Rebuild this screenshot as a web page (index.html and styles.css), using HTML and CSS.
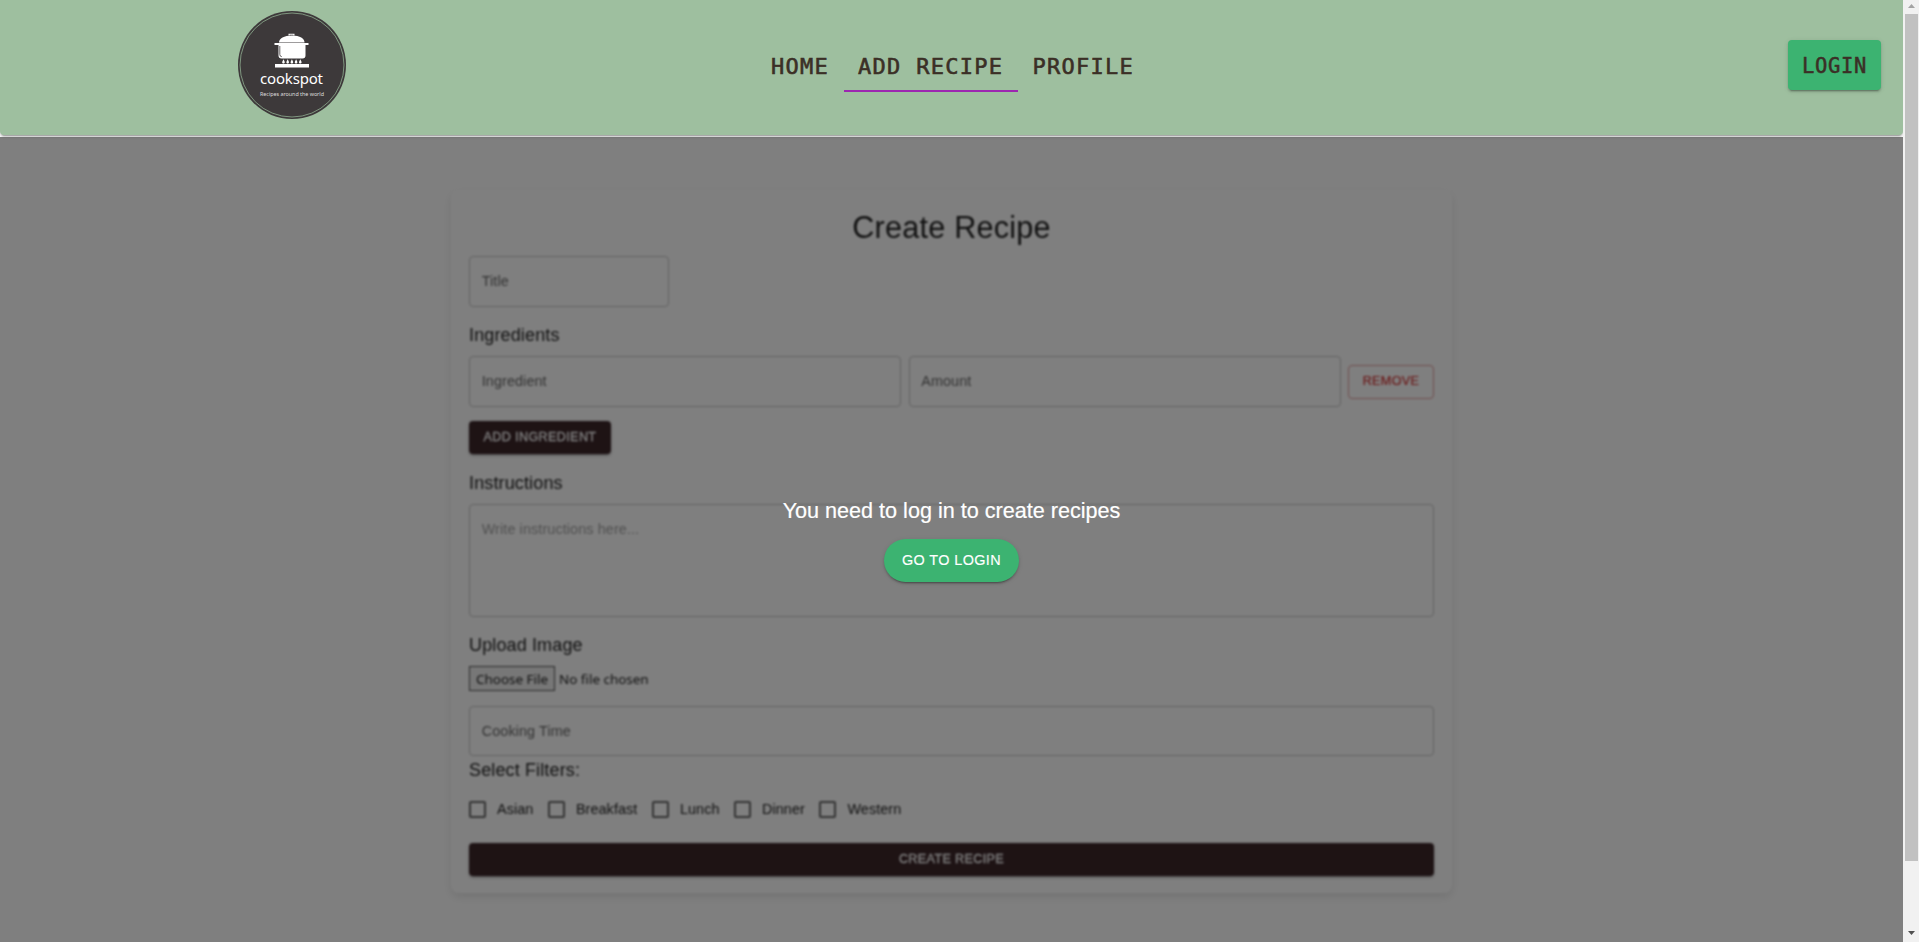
FILE: index.html
```html
<!DOCTYPE html>
<html lang="en">
<head>
<meta charset="utf-8">
<title>Cookspot</title>
<link rel="stylesheet" href="styles.css">
</head>
<body>
<div class="page">
  <header class="header">
    <svg class="logo" viewBox="0 0 108 108">
      <circle cx="54" cy="54" r="54" fill="#3d393a"/>
      <circle cx="54" cy="54" r="52" fill="none" stroke="#7f967f" stroke-width="1"/>
      <g fill="#fff">
        <path d="M50.5 24.5v-1.8h6v1.800h-1.200v-.8h-3.600v.8z"/>
        <path d="M41 31.500c0-4 5-7 13-7s12.500 3 12.500 7z"/>
        <path d="M36.500 32h34v2h-3v10.500c0 2-1 3-3 3h-21c-2 0-3-1-3-3v-10.500h-4z"/>
        <path d="M37 53h34v3.500h-34z"/>
        <path d="M45.500 48.200c2 3.300 1.300 4.300 0 4.300s-2-1 0-4.300zm4.200 0c2 3.300 1.300 4.300 0 4.300s-2-1 0-4.300zm4.200 0c2 3.300 1.300 4.300 0 4.300s-2-1 0-4.300zm4.200 0c2 3.300 1.300 4.300 0 4.300s-2-1 0-4.300zm4.200 0c2 3.300 1.300 4.300 0 4.300s-2-1 0-4.300z"/>
      </g>
      <path d="M41.800 35v8.500q0 2 2 2.200" fill="none" stroke="#3d393a" stroke-width=".8"/>
      <text class="logo-name" x="22" y="73" textLength="63">cookspot</text>
      <text class="logo-tag" x="22" y="84.500" textLength="64">Recipes around the world</text>
    </svg>
    <nav class="nav">
      <a class="tab">HOME</a>
      <a class="tab tab-active">ADD RECIPE</a>
      <a class="tab">PROFILE</a>
    </nav>
    <a class="login">LOGIN</a>
  </header>
  <main class="main">
    <section class="card">
      <h1 class="title">Create Recipe</h1>
      <div class="field field-title">Title</div>
      <h2 class="heading">Ingredients</h2>
      <div class="row">
        <div class="field grow">Ingredient</div>
        <div class="field grow">Amount</div>
        <div class="remove">REMOVE</div>
      </div>
      <div class="btn btn-add">ADD INGREDIENT</div>
      <h2 class="heading heading-instructions">Instructions</h2>
      <div class="field area">Write instructions here...</div>
      <h2 class="heading">Upload Image</h2>
      <div class="file"><span class="choose">Choose File</span><span>No file chosen</span></div>
      <div class="field field-time">Cooking Time</div>
      <h2 class="heading heading-filters">Select Filters:</h2>
      <div class="filters">
        <label class="filter"><span class="box"></span>Asian</label>
        <label class="filter"><span class="box"></span>Breakfast</label>
        <label class="filter"><span class="box"></span>Lunch</label>
        <label class="filter"><span class="box"></span>Dinner</label>
        <label class="filter"><span class="box"></span>Western</label>
      </div>
      <div class="btn">CREATE RECIPE</div>
    </section>
    <div class="overlay">
      <p class="message">You need to log in to create recipes</p>
      <a class="go">GO TO LOGIN</a>
    </div>
  </main>
</div>
<div class="scrollbar">
  <svg class="arrow" viewBox="0 0 16 14"><path d="M5 8h7L8.500 4z" fill="#a3a3a3"/></svg>
  <div class="thumb"></div>
  <svg class="arrow" viewBox="0 0 16 14"><path d="M5 5h7L8.500 9z" fill="#505050"/></svg>
</div>
</body>
</html>
```
FILE: styles.css
```css
* { box-sizing: border-box; }
body {
  margin: 0;
  height: 942px;
  display: flex;
  overflow: hidden;
  background: #fff;
  font-family: "Liberation Sans", Arial, sans-serif;
}
.page { width: 1903px; display: flex; flex-direction: column; }
.header {
  height: 135px;
  margin-bottom: 2px;
  padding: 0 22px 0 238px;
  display: grid;
  grid-template-columns: 1fr auto 1fr;
  background: #9ebf9f;
  border-radius: 0 0 4px 4px;
  box-shadow: 0 3px 1px -2px rgba(0,0,0,.2), 0 2px 2px rgba(0,0,0,.14), 0 1px 5px rgba(0,0,0,.12);
}
.logo { width: 108px; height: 108px; margin-top: 11px; }
.logo-name { font: 15px "Noto Sans", sans-serif; fill: #fff; }
.logo-tag { font: 5.400px "Noto Sans", sans-serif; fill: #ddd; }
.nav {
  display: flex;
  height: 52px;
  margin-top: 40px;
  /* offsets the uneven side padding so the tabs centre in the bar */
  transform: translateX(-107px);
}
.tab {
  padding: 0 14.500px;
  font: 22px/53px "DejaVu Sans Mono", monospace;
  letter-spacing: 1.290px;
  color: #3b2f26;
  -webkit-text-stroke: .6px #3b2f26;
}
.tab-active { border-bottom: 2px solid #9c27b0; }
.login {
  justify-self: end;
  width: 93px;
  height: 50px;
  margin-top: 40px;
  border-radius: 4px;
  background: #3cb371;
  text-align: center;
  font: 20.500px/52px "DejaVu Sans Mono", monospace;
  letter-spacing: .7px;
  color: #3b2f26;
  -webkit-text-stroke: .5px #3b2f26;
  box-shadow: 0 3px 1px -2px rgba(0,0,0,.2), 0 2px 2px rgba(0,0,0,.14), 0 1px 5px rgba(0,0,0,.12);
}
.main { position: relative; flex: 1; padding-top: 53px; }
.card {
  width: 1001px;
  height: 703px;
  margin: 0 auto;
  padding: 18px;
  border-radius: 8px;
  box-shadow: 0 4px 10px rgba(0,0,0,.1);
  background: #fff;
  filter: blur(.8px);
  color: #212121;
}
.title {
  margin: 0 0 9px;
  text-align: center;
  font-size: 30.600px;
  line-height: 38px;
  height: 39px;
  font-weight: 400;
  letter-spacing: .22px;
}
.field {
  height: 51px;
  padding: 0 11.700px;
  border: 1px solid #c4c4c4;
  border-radius: 4px;
  font-size: 14.400px;
  line-height: 48px;
  letter-spacing: .1px;
  color: #666;
}
.field-title { width: 200px; }
.heading {
  height: 29px;
  margin: 14px 0 6px;
  font-size: 18px;
  line-height: 28px;
  font-weight: 400;
  letter-spacing: .135px;
}
.row { display: flex; align-items: center; gap: 7.500px; }
.grow { flex: 1; }
.remove {
  width: 86px;
  height: 34px;
  border: 1px solid #e09a9a;
  border-radius: 4px;
  text-align: center;
  font-size: 12.600px;
  line-height: 31px;
  letter-spacing: .36px;
  color: #d32f2f;
  -webkit-text-stroke: .2px #d32f2f;
}
.btn {
  height: 33px;
  border-radius: 4px;
  background: #3c2629;
  color: #fff;
  text-align: center;
  font-size: 12.600px;
  line-height: 33px;
  letter-spacing: .36px;
  -webkit-text-stroke: .3px #fff;
  box-shadow: 0 3px 1px -2px rgba(0,0,0,.2), 0 2px 2px rgba(0,0,0,.14), 0 1px 5px rgba(0,0,0,.12);
}
.btn-add { width: 142px; margin-top: 14px; }
.heading-instructions { margin-top: 15px; }
.area { height: 113px; line-height: 49px; color: #a0a0a0; }
.file {
  display: flex;
  gap: 4px;
  height: 25px;
  margin-bottom: 15px;
  font: 13.450px/26px "Noto Sans", sans-serif;
}
.choose { width: 86px; border: 1px solid #555; background: #efefef; text-align: center; line-height: 24px; }
.field-time { height: 50px; }
.heading-filters { margin: 0 0 16px; }
.filters { display: flex; gap: 14.500px; height: 17px; margin-bottom: 25px; }
.filter { display: flex; gap: 11px; font-size: 14.400px; line-height: 16px; letter-spacing: .080px; }
.box { width: 17px; height: 17px; border: 2px solid #666; border-radius: 2px; }
.overlay {
  position: absolute;
  inset: 0;
  display: flex;
  flex-direction: column;
  align-items: center;
  justify-content: center;
  background: rgba(0,0,0,.5);
}
.message { margin: 0 0 15px; font-size: 21.600px; line-height: 27px; color: #fff; -webkit-text-stroke: .2px #fff; }
.go {
  width: 135px;
  height: 43px;
  border-radius: 22px;
  background: #3cb371;
  color: #fff;
  text-align: center;
  font-size: 14.400px;
  line-height: 43px;
  letter-spacing: .4px;
  -webkit-text-stroke: .15px #fff;
  box-shadow: 0 3px 1px -2px rgba(0,0,0,.2), 0 2px 2px rgba(0,0,0,.14), 0 1px 5px rgba(0,0,0,.12);
}
.scrollbar { width: 16px; background: #f1f1f1; display: flex; flex-direction: column; align-items: center; }
.arrow { width: 16px; height: 14px; }
.thumb { width: 13px; height: 847px; margin: 0 0 65px 1px; background: #c1c1c1; }
```
